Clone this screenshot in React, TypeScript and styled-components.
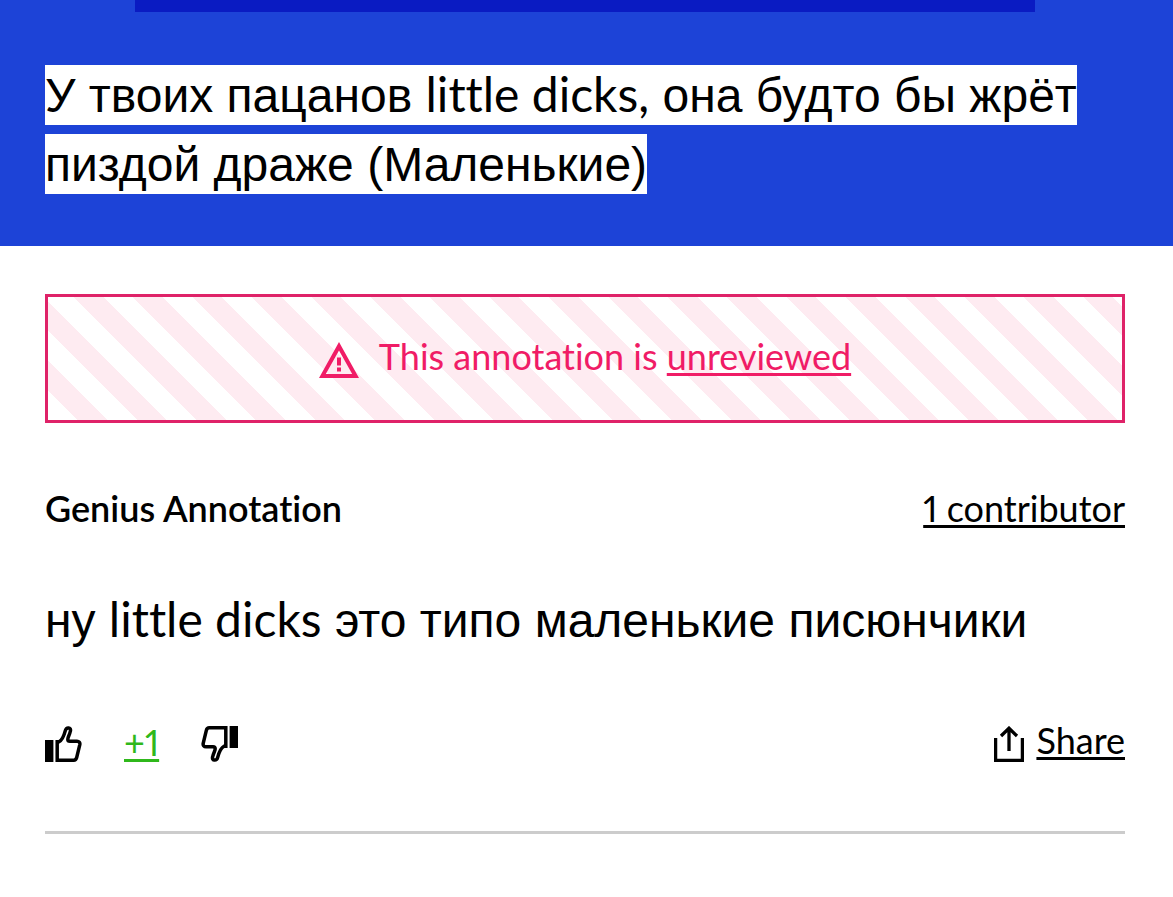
import React from 'react';
import styled, { createGlobalStyle } from 'styled-components';

const colors = {
  blue: '#1d43d7',
  deepBlue: '#0a1bc2',
  pink: '#f01c66',
  pinkBorder: '#df2268',
  pinkTint: '#feebf1',
  green: '#2fb81b',
  rule: '#cccccc',
};

const GlobalStyle = createGlobalStyle`
  * { box-sizing: border-box; }
  body {
    margin: 0;
    background: #fff;
    color: #000;
    font-family: Lato, 'Liberation Sans', sans-serif;
    font-size: 36px;
    font-variant-ligatures: none;
    font-variant-numeric: proportional-nums;
  }
`;

const Header = styled.header`
  padding: 0 48px 47px 45px;
  background: ${colors.blue};
`;

const AdBar = styled.div`
  height: 12px;
  margin: 0 90px 49px;
  background: ${colors.deepBlue};
`;

const Referent = styled.h1`
  margin: 0;
  font-family: 'Liberation Sans', sans-serif;
  font-size: 48px;
  font-weight: 400;
  line-height: 69px;
`;

const Highlight = styled.span`
  padding: 4px 0 3px;
  background: #fff;
  box-decoration-break: clone;
  -webkit-box-decoration-break: clone;
`;

const Latin = styled.span`
  font-family: Lato, sans-serif;
  line-height: 1;
`;

const Main = styled.main`
  padding: 48px 48px 60px 45px;
`;

const Notice = styled.div`
  display: flex;
  justify-content: center;
  align-items: center;
  gap: 20px;
  padding: 34px 0 38px;
  border: 3px solid ${colors.pinkBorder};
  color: ${colors.pink};
  line-height: 51px;
  background: repeating-linear-gradient(
      45deg,
      #fff 0 21px,
      ${colors.pinkTint} 21px 42px
    )
    no-repeat;
`;

const NoticeIcon = styled.svg`
  width: 40px;
  height: 36px;
  margin-top: 6px;
`;

const TextLink = styled.a`
  color: inherit;
  text-decoration: underline;
  text-decoration-thickness: 3px;
  text-underline-offset: 3px;
  text-decoration-skip-ink: none;
`;

const AnnotationHeader = styled.div`
  display: flex;
  justify-content: space-between;
  margin-top: 61px;
  line-height: 48px;
`;

const AnnotationTitle = styled.h2`
  margin: 0;
  font-size: inherit;
  font-weight: 600;
`;

const Body = styled.p`
  margin: 54px 0 67px;
  font-family: 'Liberation Sans', sans-serif;
  font-size: 48px;
  line-height: 69px;
`;

const Actions = styled.div`
  display: flex;
  justify-content: space-between;
  padding-bottom: 69px;
  border-bottom: 3px solid ${colors.rule};
  line-height: 36px;
`;

const Votes = styled.div`
  display: flex;
  align-items: flex-end;
  gap: 42px;
  height: 40px;
`;

const VoteButton = styled.button`
  display: flex;
  padding: 0;
  border: 0;
  background: none;
  color: inherit;
  cursor: pointer;
`;

const ThumbSvg = styled.svg<{ $down?: boolean }>`
  width: 37px;
  height: 36px;
  transform: ${(p) => (p.$down ? 'rotate(180deg)' : 'none')};
`;

const Score = styled(TextLink)`
  align-self: center;
  color: ${colors.green};
`;

const Share = styled.a`
  display: flex;
  align-items: flex-end;
  gap: 12px;
  height: 40px;
  color: inherit;
  text-decoration: none;
`;

const ShareLabel = styled.span`
  align-self: flex-start;
  text-decoration: underline;
  text-decoration-thickness: 3px;
  text-underline-offset: 3px;
  text-decoration-skip-ink: none;
`;

const ShareSvg = styled.svg`
  width: 30px;
  height: 36px;
`;

function Thumb({ down }: { down?: boolean }) {
  return (
    <ThumbSvg $down={down} viewBox="0 0 37 36" aria-hidden="true">
      <path d="M0 14h8.4v22H0z" fill="currentColor" />
      <path
        d="M12.2 15.8H14C17.6 14 19.2 9 20.4 4.4C21.4 .8 26.3 1.2 25.4 5C24.6 9 22.8 11 22.8 13.2C22.8 14.8 23.6 15.3 25 15.3H32C34 15.3 35.2 16.6 34.8 18.6L31.6 31.8C31.1 33.6 30.3 34.2 28.8 34.2H12.2Z"
        fill="none"
        stroke="currentColor"
        strokeWidth="3.5"
      />
    </ThumbSvg>
  );
}

export default function App() {
  return (
    <>
      <GlobalStyle />
      <Header>
        <AdBar />
        <Referent>
          <Highlight>
            У твоих пацанов <Latin>little dicks,</Latin> она будто бы жрёт пиздой драже (Маленькие)
          </Highlight>
        </Referent>
      </Header>
      <Main>
        <Notice>
          <NoticeIcon viewBox="0 0 40 36" aria-hidden="true">
            <path
              d="M20 0L40 36H0ZM20 8.4L6.8 32H33.2ZM18 15.5V23.5H22V15.5ZM18 25.5V29.5H22V25.5Z"
              fill="currentColor"
              fillRule="evenodd"
            />
          </NoticeIcon>
          <span>
            This annotation is <TextLink href="#unreviewed">unreviewed</TextLink>
          </span>
        </Notice>
        <AnnotationHeader>
          <AnnotationTitle>Genius Annotation</AnnotationTitle>
          <TextLink href="#contributors">1 contributor</TextLink>
        </AnnotationHeader>
        <Body>
          ну <Latin>little dicks</Latin> это типо маленькие писюнчики
        </Body>
        <Actions>
          <Votes>
            <VoteButton type="button" aria-label="Upvote">
              <Thumb />
            </VoteButton>
            <Score href="#votes">+1</Score>
            <VoteButton type="button" aria-label="Downvote">
              <Thumb down />
            </VoteButton>
          </Votes>
          <Share href="#share">
            <ShareSvg viewBox="0 0 30 36" fill="none" stroke="currentColor" strokeWidth="3.3" aria-hidden="true">
              <path d="M1.6 12V34.4H28.4V12M15 25V2.5M7 10L15 2.2L23 10" />
            </ShareSvg>
            <ShareLabel>Share</ShareLabel>
          </Share>
        </Actions>
      </Main>
    </>
  );
}
